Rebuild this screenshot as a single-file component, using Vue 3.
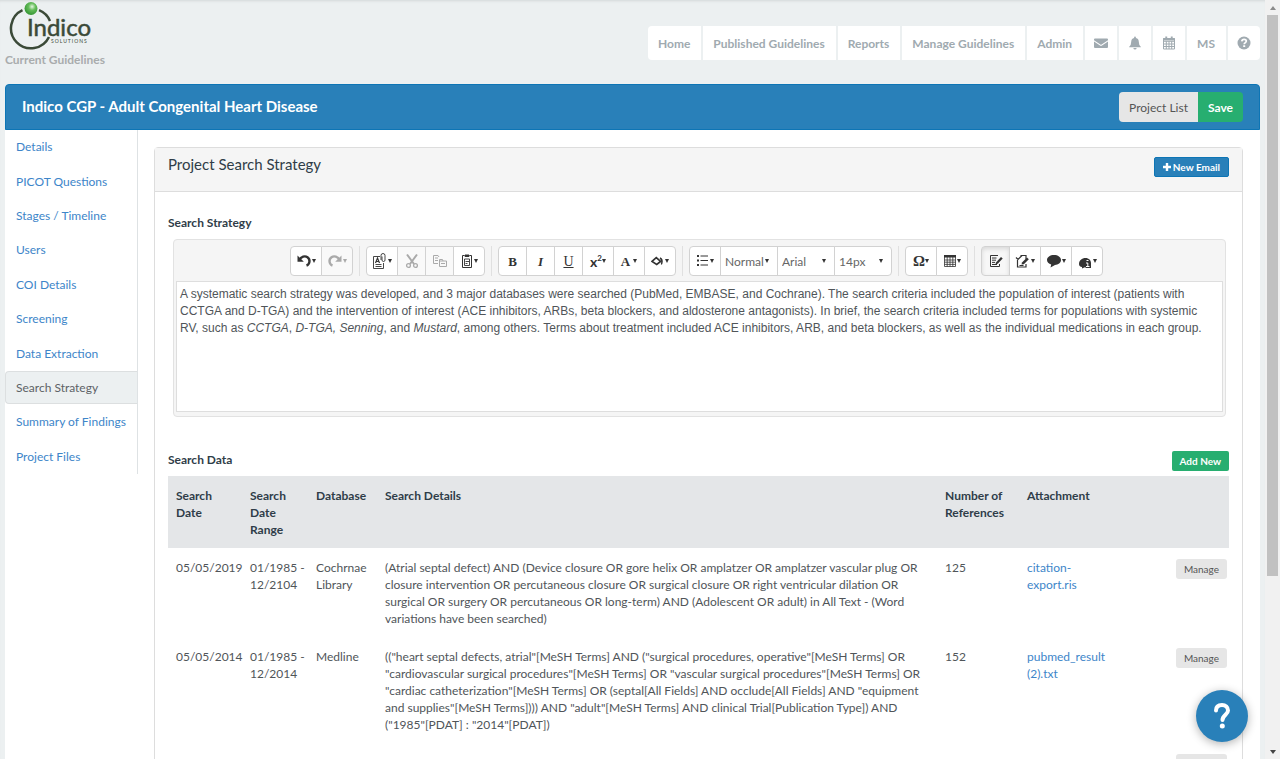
<script setup>
import { ref } from 'vue'

const navLinks = ['Home', 'Published Guidelines', 'Reports', 'Manage Guidelines', 'Admin']

const icons = {
  mail: '<svg width="14" height="14" viewBox="0 0 14 14" fill="currentColor"><path d="M1 2.500h12q1 0 1 1v.8L7.600 8.500q-.6.400-1.200 0L0 4.300v-.8q0-1 1-1zM0 5.600l6 4q1 .6 2 0l6-4v5.400q0 1-1 1H1q-1 0-1-1z"/></svg>',
  bell: '<svg width="14" height="14" viewBox="0 0 14 14" fill="currentColor"><path d="M7 .5q.9 0 .9 1v.4q2.900.6 2.900 3.900 0 3.500 2 4.900v.6H1.200v-.6q2-1.400 2-4.900 0-3.300 2.900-3.900v-.4q0-1 .9-1zM5.300 12h3.400q-.3 1.600-1.700 1.600T5.300 12z"/></svg>',
  calendar: '<svg width="14" height="14" viewBox="0 0 14 14"><path d="M1.500 2.500h11v10.500h-11zM1.500 5.300h11M1.500 8h11M1.500 10.500h11M4.300 5.300V13M7 5.300V13M9.700 5.300V13" fill="none" stroke="currentColor"/><path d="M1 2.200h12v2.300H1zM3.300.5h1.900v3H3.300zM8.800.5h1.900v3H8.800z" fill="currentColor"/></svg>',
  help: '<svg width="14" height="14" viewBox="0 0 14 14"><circle cx="7" cy="7" r="6.500" fill="currentColor"/><path d="M4.800 5.300q.2-2 2.300-2 2.200 0 2.200 1.800 0 1-1.100 1.600-1 .5-1 1.500" fill="none" stroke="#fff" stroke-width="1.700"/><path d="M6.200 9.200h2v1.700h-2z" fill="#fff"/></svg>',
  undo: '<svg width="16" height="16" viewBox="0 0 16 16"><path d="M3.500 7C5 3.500 9 2.500 11.500 4.300c3.200 2.400 2.300 7-1 8.200" fill="none" stroke="currentColor" stroke-width="2.400"/><path d="M1.500 2.500v6.300h6.300z" fill="currentColor"/></svg>',
  redo: '<svg width="16" height="16" viewBox="0 0 16 16"><path d="M12.500 7C11 3.500 7 2.500 4.500 4.300c-3.200 2.400-2.300 7 1 8.200" fill="none" stroke="currentColor" stroke-width="2.400"/><path d="M14.500 2.500v6.300H8.200z" fill="currentColor"/></svg>',
  copyFormat: '<svg width="16" height="16" viewBox="0 0 16 16" fill="none" stroke="currentColor" stroke-width=".9"><path d="M8 3.500H1.500v12h10V10M3.500 13.500h6M3.500 11.500h6"/><path d="M3.500 10 5.500 5l2 5M4.300 8.500h2.500" stroke-width="1.200"/><path d="M9 7V2.500a2 2 0 0 1 4 0V7a1.500 1.500 0 0 1-3 0V3.500"/></svg>',
  cut: '<svg width="14" height="16" viewBox="0 0 14 16" fill="none" stroke="currentColor"><path d="M2 1.500 9 11M12 1.500 5 11" stroke-width="2"/><circle cx="3.500" cy="12.500" r="1.900" stroke-width="1.300"/><circle cx="10.500" cy="12.500" r="1.900" stroke-width="1.300"/></svg>',
  copy: '<svg width="14" height="14" viewBox="0 0 14 14" fill="none" stroke="currentColor"><path d="M5 9.500H.5v-8H5l1 1.500M2 4h3M2 6.500h3"/><path d="M6.500 5.500h3l.5 1.500h3.500v5.500h-7zM7 7h3M8 9.500h4"/></svg>',
  paste: '<svg width="14" height="16" viewBox="0 0 14 16" fill="none" stroke="currentColor"><path d="M4.500 2.500H2.500v12h9v-12h-2"/><path d="M5 2h4v1.500H5z" fill="currentColor"/><path d="M4.500 6h5v6.500h-5zM5.500 8.500h3.500M5.500 10.500h2" stroke-width=".9"/></svg>',
  bucket: '<svg width="14" height="12" viewBox="0 0 16 14"><path d="M1 7.500 6 3l5 4.500L6.500 11z" fill="none" stroke="currentColor" stroke-width="2"/><path d="M10.500 2.500q4.500 2 2.500 8-1.300 1.500-1.700 0 1.300-4-1.300-6z" fill="currentColor"/></svg>',
  list: '<svg width="14" height="14" viewBox="0 0 14 14"><path d="M1 1h2v2H1zM1 5.500h2v2H1zM1 10h2v2H1z" fill="currentColor"/><path d="M4.500 2H12M4.500 6.500H12M4.500 11H12" stroke="currentColor"/></svg>',
  table: '<svg width="14" height="14" viewBox="0 0 14 14"><path d="M1.500 1.500h11v11h-11zM1.500 6h11M1.500 8.200h11M1.500 10.400h11M4.200 3v9.500M7 3v9.500M9.800 3v9.500" fill="none" stroke="currentColor" stroke-width=".8"/><path d="M1 1h12v2.500H1z" fill="currentColor"/></svg>',
  edit: '<svg width="14" height="14" viewBox="0 0 14 14"><path d="M9 1.500H1.500v11h9V10M3 4h4.500M3 6.200h4M3 8.400h3M3 10.500h5" fill="none" stroke="currentColor"/><path d="M7 8.500 12 3l1.700 1.500-5 5.300L6.500 10.500z" fill="currentColor"/></svg>',
  track: '<svg width="16" height="15" viewBox="0 0 16 15"><path d="M5.500 1.500h5.500V5M2.500 6v7h8.500v-3M4.500 11.500h4M1 3.500l2 2 4-4" fill="none" stroke="currentColor" stroke-width="1.200"/><path d="M7 8.500l5-5 1.800 1.700-5 5L6.500 10.500z" fill="currentColor"/></svg>',
  comment: '<svg width="16" height="14" viewBox="0 0 16 14"><path d="M8 1c3.900 0 7 2.100 7 5s-2.800 4.800-6 5l-4.500 2.500.7-3C2.700 9.600 1 8 1 6c0-2.900 3.100-5 7-5z" fill="currentColor"/></svg>',
  info: '<svg width="16" height="16" viewBox="0 0 16 16"><path d="M2 11c0-3.500 3-6 6.500-6S14 7.500 14 10v5H8.500v-1L5 15.500V14Q2 13.500 2 11z" fill="currentColor"/><path d="M9.500 7.500h2M9 10h1.800v3.500M9 13.500h3.500" fill="none" stroke="#fff"/></svg>'
}

const tools = [
  [
    { label: 'Undo', icon: 'undo', caret: true },
    { label: 'Redo', icon: 'redo', caret: true, off: true }
  ],
  [
    { label: 'Copy formatting', icon: 'copyFormat', caret: true },
    { label: 'Cut', icon: 'cut', off: true },
    { label: 'Copy', icon: 'copy', off: true },
    { label: 'Paste', icon: 'paste', caret: true }
  ],
  [
    { label: 'Bold', glyph: 'B', cls: 'g-bold' },
    { label: 'Italic', glyph: 'I', cls: 'g-italic' },
    { label: 'Underline', glyph: 'U', cls: 'g-under' },
    { label: 'Superscript', glyph: 'x', sup: '2', cls: 'g-sup', caret: true },
    { label: 'Text colour', glyph: 'A', cls: 'g-bold', caret: true },
    { label: 'Fill colour', icon: 'bucket', caret: true }
  ],
  [
    { label: 'List', icon: 'list', caret: true },
    { label: 'Paragraph style', options: ['Normal', 'Heading'] },
    { label: 'Font', options: ['Arial', 'Georgia'] },
    { label: 'Font size', options: ['14px', '16px'] }
  ],
  [
    { label: 'Special character', glyph: 'Ω', cls: 'g-omega', caret: true },
    { label: 'Table', icon: 'table', caret: true }
  ],
  [
    { label: 'Edit mode', icon: 'edit', on: true },
    { label: 'Track changes', icon: 'track', caret: true },
    { label: 'Comments', icon: 'comment', caret: true },
    { label: 'Information', icon: 'info', caret: true }
  ]
]

const sections = [
  'Details', 'PICOT Questions', 'Stages / Timeline', 'Users', 'COI Details',
  'Screening', 'Data Extraction', 'Search Strategy', 'Summary of Findings', 'Project Files'
]
const current = ref('Search Strategy')

const rows = [
  {
    date: '05/05/2019', range: '01/1985 - 12/2104', db: 'Cochrnae Library', refs: '125', file: 'citation-export.ris',
    details: '(Atrial septal defect) AND (Device closure OR gore helix OR amplatzer OR amplatzer vascular plug OR closure intervention OR percutaneous closure OR surgical closure OR right ventricular dilation OR surgical OR surgery OR percutaneous OR long-term) AND (Adolescent OR adult) in All Text - (Word variations have been searched)'
  },
  {
    date: '05/05/2014', range: '01/1985 - 12/2014', db: 'Medline', refs: '152', file: 'pubmed_result (2).txt',
    details: '(("heart septal defects, atrial"[MeSH Terms] AND ("surgical procedures, operative"[MeSH Terms] OR "cardiovascular surgical procedures"[MeSH Terms] OR "vascular surgical procedures"[MeSH Terms] OR "cardiac catheterization"[MeSH Terms] OR (septal[All Fields] AND occlude[All Fields] AND "equipment and supplies"[MeSH Terms]))) AND "adult"[MeSH Terms] AND clinical Trial[Publication Type]) AND ("1985"[PDAT] : "2014"[PDAT])'
  },
  { date: '', range: '', db: '', refs: '', file: '', details: '' }
]
</script>

<template>
  <div class="window">
    <div class="page">
      <header class="top">
        <div class="brand">
          <svg class="logo" width="90" height="51" viewBox="0 0 90 51" role="img" aria-label="Indico Solutions">
            <defs>
              <radialGradient id="ball" cx="58%" cy="36%" r="60%">
                <stop offset="0" stop-color="#e4f6e0" />
                <stop offset=".45" stop-color="#65bd5b" />
                <stop offset="1" stop-color="#3a9a38" />
              </radialGradient>
            </defs>
            <path d="M17.500 10.200A20 20 0 1 0 44 37M34 10.200A20 20 0 0 1 45 21" fill="none" stroke="#3b4a38" stroke-width="2.500" />
            <circle cx="26" cy="8.500" r="6.500" fill="url(#ball)" />
            <text x="22" y="36" font-size="24" fill="#3b4a38" stroke="#3b4a38" stroke-width=".5">Indico</text>
            <text class="tag" x="46" y="43" font-size="5" fill="#3b4a38">SOLUTIONS</text>
          </svg>
          <p class="crumb">Current Guidelines</p>
        </div>
        <nav class="nav" aria-label="Main">
          <a v-for="n in navLinks" :key="n" href="#">{{ n }}</a>
          <a class="pic" href="#" aria-label="Messages" v-html="icons.mail"></a>
          <a class="pic" href="#" aria-label="Alerts" v-html="icons.bell"></a>
          <a class="pic" href="#" aria-label="Calendar" v-html="icons.calendar"></a>
          <a href="#">MS</a>
          <a class="pic" href="#" aria-label="Help" v-html="icons.help"></a>
        </nav>
      </header>

      <div class="titlebar">
        <h1>Indico CGP - Adult Congenital Heart Disease</h1>
        <div class="actions">
          <button type="button" class="plain">Project List</button>
          <button type="button" class="save">Save</button>
        </div>
      </div>

      <div class="body">
        <nav class="side" aria-label="Project sections">
          <a v-for="s in sections" :key="s" href="#" :class="{ active: s === current }" @click.prevent="current = s">{{ s }}</a>
        </nav>

        <main class="panel">
          <div class="panel-head">
            <h2>Project Search Strategy</h2>
            <button type="button" class="small blue">
              <svg width="8" height="8" viewBox="0 0 8 8" aria-hidden="true"><path d="M4 0v8M0 4h8" stroke="#fff" stroke-width="2.400" /></svg>
              New Email
            </button>
          </div>

          <div class="panel-body">
            <h3 id="strategy-label">Search Strategy</h3>
            <div class="editor">
              <div class="toolbar" role="toolbar" aria-label="Formatting">
                <div v-for="(group, i) in tools" :key="i" class="group">
                  <template v-for="t in group" :key="t.label">
                    <span v-if="t.options" class="pick">
                      <select :aria-label="t.label">
                        <option v-for="o in t.options" :key="o">{{ o }}</option>
                      </select>
                      <i class="caret"></i>
                    </span>
                    <button v-else type="button" :aria-label="t.label" :disabled="t.off" :class="{ wide: t.caret, on: t.on }">
                      <span v-if="t.icon" class="ico" v-html="icons[t.icon]"></span>
                      <span v-else :class="t.cls">{{ t.glyph }}<sup v-if="t.sup">{{ t.sup }}</sup></span>
                      <i v-if="t.caret" class="caret"></i>
                    </button>
                  </template>
                </div>
              </div>
              <div class="content" contenteditable="true" role="textbox" aria-multiline="true" aria-labelledby="strategy-label" spellcheck="false">
                A systematic search strategy was developed, and 3 major databases were searched (PubMed, EMBASE, and Cochrane). The search criteria included the population of interest (patients with CCTGA and D-TGA) and the intervention of interest (ACE inhibitors, ARBs, beta blockers, and aldosterone antagonists). In brief, the search criteria included terms for populations with systemic RV, such as <em>CCTGA</em>, <em>D-TGA, Senning</em>, and <em>Mustard</em>, among others. Terms about treatment included ACE inhibitors, ARB, and beta blockers, as well as the individual medications in each group.
              </div>
            </div>

            <div class="data-head">
              <h3>Search Data</h3>
              <button type="button" class="small green">Add New</button>
            </div>
            <table>
              <colgroup>
                <col class="c-date"><col class="c-range"><col class="c-db"><col><col class="c-refs"><col class="c-file"><col class="c-act">
              </colgroup>
              <thead>
                <tr>
                  <th>Search Date</th>
                  <th>Search Date Range</th>
                  <th>Database</th>
                  <th>Search Details</th>
                  <th>Number of References</th>
                  <th>Attachment</th>
                  <th></th>
                </tr>
              </thead>
              <tbody>
                <tr v-for="(r, i) in rows" :key="i">
                  <td>{{ r.date }}</td>
                  <td class="range">{{ r.range }}</td>
                  <td>{{ r.db }}</td>
                  <td>{{ r.details }}</td>
                  <td>{{ r.refs }}</td>
                  <td><a v-if="r.file" href="#">{{ r.file }}</a></td>
                  <td class="act"><button type="button" class="small grey">Manage</button></td>
                </tr>
              </tbody>
            </table>
          </div>
        </main>
      </div>
    </div>

    <div class="scrollbar" aria-hidden="true">
      <i class="arrow up"></i>
      <div class="track"><div class="thumb"></div></div>
      <i class="arrow down"></i>
    </div>

    <button type="button" class="help" aria-label="Help">
      <svg width="20" height="28" viewBox="0 0 20 28"><path d="M4 8.500C4 4.500 6.500 3 10 3s6 2 6 5.500c0 4-5.500 4.500-5.500 9.500" fill="none" stroke="#fff" stroke-width="4" stroke-linecap="round" /><circle cx="10.300" cy="24" r="2.500" fill="#fff" /></svg>
    </button>
  </div>
</template>

<style>
body {
  margin: 0;
  background: #ecf0f1;
}
</style>

<style scoped>
.window {
  display: flex;
  height: 100vh;
  overflow: hidden;
  font-family: Lato, "Open Sans", sans-serif;
  font-size: 12px;
  line-height: 17px;
  color: #505559;
  background: #ecf0f1;
}
.window * { box-sizing: border-box; }
h1, h2, h3, p { margin: 0; }
a { color: #3d85c9; text-decoration: none; }
button, select { font: inherit; cursor: pointer; }

.page {
  flex: 1;
  min-width: 0;
  display: flex;
  flex-direction: column;
  padding: 0 5px;
  box-shadow: inset 0 3px 3px -2px #d3d7d8;
}
.top {
  display: flex;
  flex: none;
  justify-content: space-between;
  height: 84px;
}
.logo { display: block; font-family: Lato, sans-serif; }
.tag { letter-spacing: 1px; }
.crumb { color: #a9acad; font-weight: bold; }
.nav {
  display: flex;
  gap: 2px;
  height: 34px;
  margin-top: 26px;
  border-radius: 4px;
  overflow: hidden;
}
.nav a {
  display: flex;
  align-items: center;
  padding: 0 11px 0 10px;
  background: #fff;
  color: #a0aab0;
  font-weight: bold;
}
.nav .pic { padding: 0 9px; }
.titlebar {
  display: flex;
  flex: none;
  justify-content: space-between;
  align-items: center;
  height: 46px;
  padding: 0 16px;
  background: #2980b9;
  border: 1px solid #0d75b5;
  border-radius: 4px 4px 0 0;
}
h1 {
  padding-bottom: 3px;
  color: #fff;
  font-size: 15px;
  line-height: 20px;
}
.actions { display: flex; }
.actions button {
  height: 30px;
  padding: 0 10px;
  border: 0;
}
.plain { background: #e6e6e6; color: #555; border-radius: 4px 0 0 4px; }
.save { background: #27ae70; color: #fff; font-weight: bold; border-radius: 0 4px 4px 0; }

.body {
  flex: none;
  display: flex;
  align-items: flex-start;
  padding-right: 17px;
  background: #fff;
}
.side {
  flex: none;
  display: grid;
  grid-auto-rows: 1fr;
  width: 133px;
  height: 344px;
  border-right: 1px solid #dee2e4;
}
.side a {
  display: flex;
  align-items: center;
  margin-bottom: 1px;
  padding: 0 10px;
  border: 1px solid transparent;
  border-right: 0;
}
.side .active {
  background: #ecf0f1;
  border-color: #dcdfe0;
  border-radius: 4px 0 0 4px;
  color: #5d6266;
}

.panel {
  flex: 1;
  min-width: 0;
  margin: 17px 0 0 16px;
  border: 1px solid #ddd;
  border-radius: 4px;
}
.panel-head {
  display: flex;
  justify-content: space-between;
  align-items: flex-start;
  height: 44px;
  padding: 8px 13px;
  background: #f5f5f5;
  border-bottom: 1px solid #ddd;
}
h2 {
  color: #2f3d48;
  font-size: 15px;
  line-height: 17px;
  font-weight: normal;
}
h3 {
  color: #2f3d48;
  font-size: 12px;
  line-height: 17px;
}
.small {
  display: inline-flex;
  align-items: center;
  gap: 2px;
  height: 20px;
  padding: 0 8px;
  border: 0;
  border-radius: 2px;
  font-size: 10px;
  line-height: 16px;
}
.blue { margin-top: 1px; background: #2980b9; color: #fff; font-weight: bold; border: 1px solid #0d75b5; }
.green { background: #27ae70; color: #fff; font-weight: bold; }
.grey { background: #e6e6e6; color: #555; border-radius: 3px; }

.panel-body { padding: 22px 13px 12px; }
.editor {
  margin: 8px 3px 0 5px;
  padding: 0 2px 4px;
  background: #f5f5f5;
  border: 1px solid #e2e2e2;
  border-radius: 4px;
}
.toolbar {
  display: flex;
  justify-content: center;
  padding: 6px 6px 5px 0;
}
.group { display: flex; height: 30px; }
.group + .group {
  margin-left: 6px;
  padding-left: 6px;
  border-left: 1px solid #e0e0e0;
}
.group button, .pick {
  display: flex;
  align-items: center;
  justify-content: center;
  width: 29px;
  margin-right: -1px;
  padding: 0;
  background: #fff;
  border: 1px solid #d2d2d2;
  color: #333;
}
.group .wide { width: 32px; }
.group > :first-child { border-radius: 4px 0 0 4px; }
.group > :last-child { border-radius: 0 4px 4px 0; margin-right: 0; }
.group button:disabled { background: #f9f9f9; color: #aaa; }
.group .on { background: #f7f7f7; box-shadow: inset 0 2px 4px #d8d8d8; }
.ico { display: flex; }
.caret {
  flex: none;
  width: 0;
  border: 2px solid transparent;
  border-top: 4px solid currentColor;
  border-bottom: 0;
}
.pick {
  width: 58px;
  padding: 0 8px 0 4px;
}
.pick select {
  flex: 1;
  min-width: 0;
  appearance: none;
  padding: 0;
  border: 0;
  background: none;
  color: #666;
}
.g-bold, .g-italic, .g-under, .g-omega {
  font-family: "Liberation Serif", serif;
  font-size: 13px;
  font-weight: bold;
}
.wide .g-bold { margin-right: 3px; }
.g-italic { font-style: italic; }
.g-under { font-weight: normal; font-size: 14px; text-decoration: underline; }
.g-omega { font-size: 15px; }
.g-sup { font-weight: bold; font-size: 14px; }
.g-sup sup { font-size: 8px; line-height: 8px; }

.content {
  min-height: 131px;
  padding: 4px 12px 4px 3px;
  background: #fff;
  border: 1px solid #dedede;
  font-family: "Liberation Sans", Arial, sans-serif;
}
.data-head {
  display: flex;
  justify-content: space-between;
  align-items: flex-start;
  margin-top: 34px;
  padding-bottom: 5px;
}
table {
  width: 100%;
  table-layout: fixed;
  border-collapse: collapse;
}
.c-date { width: 74px; }
.c-range { width: 66px; }
.c-db { width: 69px; }
.c-refs { width: 82px; }
.c-file { width: 96px; }
.c-act { width: 114px; }
th, td {
  padding: 11px 4px 10px 8px;
  text-align: left;
  vertical-align: top;
}
th { background: #e4e6e8; color: #2f3d48; }
th:nth-child(-n+2) { padding-right: 20px; }
td.range { padding-right: 0; }
td.act { padding: 11px 2px 10px; text-align: right; line-height: 0; }

.scrollbar {
  flex: none;
  display: flex;
  flex-direction: column;
  align-items: center;
  width: 15px;
  background: #f1f1f1;
}
.track { flex: 1; width: 11px; }
.thumb { height: 77%; background: #c1c1c1; }
.arrow {
  width: 0;
  margin: 6px 0 5px;
  border: 3px solid transparent;
}
.up { border-top: 0; border-bottom: 4px solid #8a8a8a; }
.down { border-bottom: 0; border-top: 4px solid #444; }

.help {
  position: fixed;
  right: 32px;
  bottom: 17px;
  display: flex;
  align-items: center;
  justify-content: center;
  width: 52px;
  height: 52px;
  padding: 0;
  border: 0;
  border-radius: 50%;
  background: #2980b9;
  box-shadow: 0 2px 10px rgba(0, 0, 0, .3);
}
</style>
